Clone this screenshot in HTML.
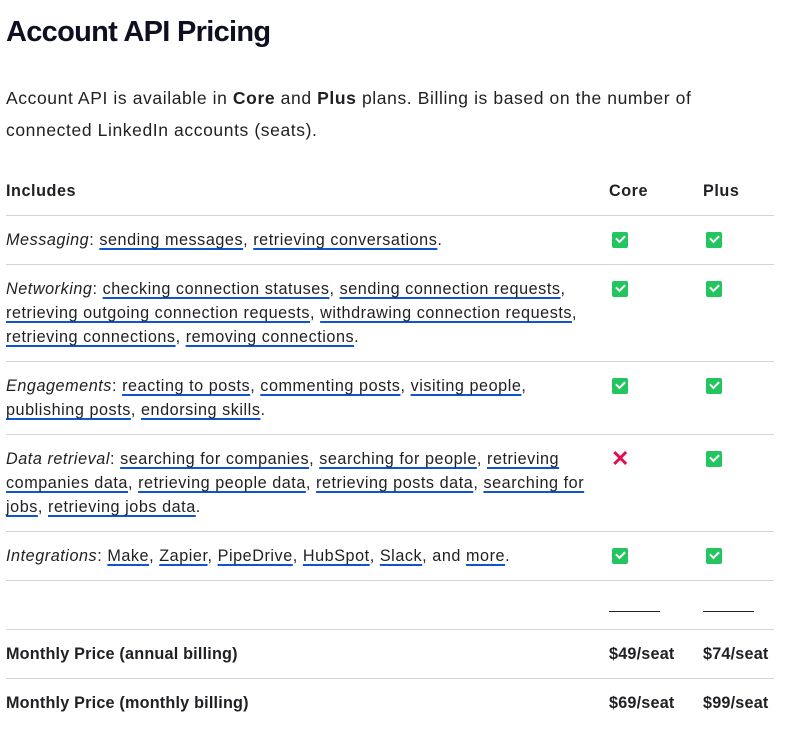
<!DOCTYPE html>
<html><head><meta charset="utf-8"><style>
body{margin:0;background:#fff;font-family:"Liberation Sans",sans-serif;color:#1f1f24;width:797px;height:731px;overflow:hidden;position:relative}
h1{position:absolute;left:6px;top:12px;margin:0;font-size:29px;font-weight:700;color:#0e1022;letter-spacing:-0.7px;line-height:40px}
p.intro{position:absolute;left:6px;top:82px;margin:0;font-size:17.5px;line-height:32px;letter-spacing:0.6px}
table{position:absolute;left:6px;top:166px;border-collapse:collapse;width:768px;font-size:16.2px;letter-spacing:0.55px}
td,th{padding:12px 0 12px 0;line-height:24px;vertical-align:top;text-align:left;border-bottom:1px solid #d4d4d4}
th{font-weight:600;padding-top:13px;padding-bottom:12px}
tr:last-child td{border-bottom:none}
td.c1{width:603px}
td.c2{width:94px}
a{color:#1f1f24;text-decoration:underline;text-decoration-color:#1155cc;text-decoration-thickness:2px;text-underline-offset:3px}
.ck{display:inline-block;width:16px;height:16px;background:#22c55e;border-radius:2px;margin:4px 0 0 3px;position:relative;vertical-align:top}
.ck:after{content:"";position:absolute;left:4px;top:3px;width:7px;height:4px;border-left:2px solid #fff;border-bottom:2px solid #fff;transform:rotate(-45deg)}
.x{display:inline-block;margin:1px 0 0 2px;color:#e0114f;font-weight:700;font-size:22px;line-height:22px}
.dash{display:block;width:51px;border-top:1.5px solid #222;margin-top:18px;height:0}
.drow td{height:24px}
b{font-weight:700}
.pr td{font-weight:700;letter-spacing:0.2px}
</style></head><body>
<h1>Account API Pricing</h1>
<p class="intro">Account API is available in <b>Core</b> and <b>Plus</b> plans. Billing is based on the number of<br>connected LinkedIn accounts (seats).</p>
<table>
<tr><th class="c1">Includes</th><th>Core</th><th>Plus</th></tr>
<tr><td class="c1"><i>Messaging</i>: <a>sending messages</a>, <a>retrieving conversations</a>.</td><td class="c2"><span class="ck"></span></td><td><span class="ck"></span></td></tr>
<tr><td class="c1"><i>Networking</i>: <a>checking connection statuses</a>, <a>sending connection requests</a>,<br><a>retrieving outgoing connection requests</a>, <a>withdrawing connection requests</a>,<br><a>retrieving connections</a>, <a>removing connections</a>.</td><td><span class="ck"></span></td><td><span class="ck"></span></td></tr>
<tr><td class="c1"><i>Engagements</i>: <a>reacting to posts</a>, <a>commenting posts</a>, <a>visiting people</a>,<br><a>publishing posts</a>, <a>endorsing skills</a>.</td><td><span class="ck"></span></td><td><span class="ck"></span></td></tr>
<tr><td class="c1"><i>Data retrieval</i>: <a>searching for companies</a>, <a>searching for people</a>, <a>retrieving</a><br><a>companies data</a>, <a>retrieving people data</a>, <a>retrieving posts data</a>, <a>searching for</a><br><a>jobs</a>, <a>retrieving jobs data</a>.</td><td><span class="x">✕</span></td><td><span class="ck"></span></td></tr>
<tr><td class="c1"><i>Integrations</i>: <a>Make</a>, <a>Zapier</a>, <a>PipeDrive</a>, <a>HubSpot</a>, <a>Slack</a>, and <a>more</a>.</td><td><span class="ck"></span></td><td><span class="ck"></span></td></tr>
<tr class="drow"><td class="c1"></td><td><span class="dash"></span></td><td><span class="dash"></span></td></tr>
<tr class="pr"><td class="c1">Monthly Price (annual billing)</td><td>$49/seat</td><td>$74/seat</td></tr>
<tr class="pr"><td class="c1">Monthly Price (monthly billing)</td><td>$69/seat</td><td>$99/seat</td></tr>
</table>
</body></html>
